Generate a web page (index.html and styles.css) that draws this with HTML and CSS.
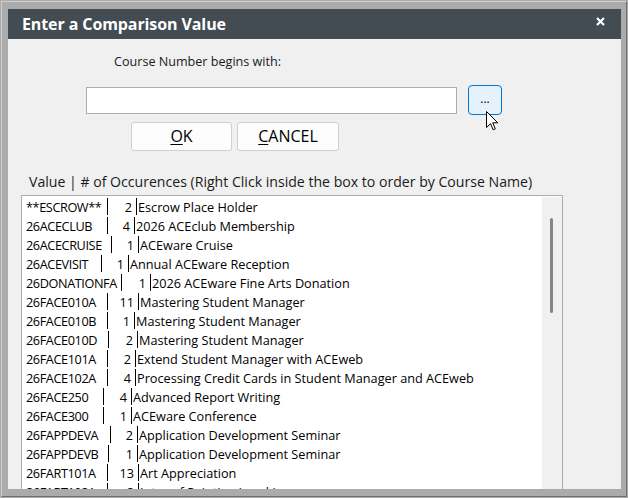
FILE: index.html
```html
<!DOCTYPE html>
<html>
<head>
<meta charset="utf-8">
<link rel="stylesheet" href="styles.css">
</head>
<body>
<div class="screen">
  <div class="bevel">
    <div class="dialog">
      <div class="titlebar">
        <span class="title">Enter a Comparison Value</span>
        <svg class="close" width="9" height="9" viewBox="0 0 9 9"><path d="M1 1 L8 8 M8 1 L1 8" stroke="#fff" stroke-width="2.2" fill="none"/></svg>
      </div>
      <div class="body">
        <div class="prompt">Course Number begins with:</div>
        <div class="inputrow">
          <div class="field"></div>
          <div class="dots">...</div>
        </div>
        <div class="btnrow">
          <div class="btn ok"><u>O</u>K</div>
          <div class="btn cancel"><u>C</u>ANCEL</div>
        </div>
        <div class="listlabel">Value | # of Occurences (Right Click inside the box to order by Course Name)</div>
        <div class="list">
          <div class="rows">
            <div class="row"><span class="v" style="width:81px">**ESCROW**</span><i class="sep"></i><span class="n" style="width:28px">2</span><i class="sep"></i><span class="t">Escrow Place Holder</span></div>
            <div class="row"><span class="v" style="width:81px">26ACECLUB</span><i class="sep"></i><span class="n" style="width:26px">4</span><i class="sep"></i><span class="t">2026 ACEclub Membership</span></div>
            <div class="row"><span class="v" style="width:85px">26ACECRUISE</span><i class="sep"></i><span class="n" style="width:26px">1</span><i class="sep"></i><span class="t">ACEware Cruise</span></div>
            <div class="row"><span class="v" style="width:75px">26ACEVISIT</span><i class="sep"></i><span class="n" style="width:26px">1</span><i class="sep"></i><span class="t">Annual ACEware Reception</span></div>
            <div class="row"><span class="v" style="width:95px">26DONATIONFA</span><i class="sep"></i><span class="n" style="width:28px">1</span><i class="sep"></i><span class="t">2026 ACEware Fine Arts Donation</span></div>
            <div class="row"><span class="v" style="width:81px">26FACE010A</span><i class="sep"></i><span class="n" style="width:30px">11</span><i class="sep"></i><span class="t">Mastering Student Manager</span></div>
            <div class="row"><span class="v" style="width:81px">26FACE010B</span><i class="sep"></i><span class="n" style="width:26px">1</span><i class="sep"></i><span class="t">Mastering Student Manager</span></div>
            <div class="row"><span class="v" style="width:82px">26FACE010D</span><i class="sep"></i><span class="n" style="width:28px">2</span><i class="sep"></i><span class="t">Mastering Student Manager</span></div>
            <div class="row"><span class="v" style="width:81px">26FACE101A</span><i class="sep"></i><span class="n" style="width:27px">2</span><i class="sep"></i><span class="t">Extend Student Manager with ACEweb</span></div>
            <div class="row"><span class="v" style="width:81px">26FACE102A</span><i class="sep"></i><span class="n" style="width:27px">4</span><i class="sep"></i><span class="t">Processing Credit Cards in Student Manager and ACEweb</span></div>
            <div class="row"><span class="v" style="width:77px">26FACE250</span><i class="sep"></i><span class="n" style="width:27px">4</span><i class="sep"></i><span class="t">Advanced Report Writing</span></div>
            <div class="row"><span class="v" style="width:77px">26FACE300</span><i class="sep"></i><span class="n" style="width:27px">1</span><i class="sep"></i><span class="t">ACEware Conference</span></div>
            <div class="row"><span class="v" style="width:84px">26FAPPDEVA</span><i class="sep"></i><span class="n" style="width:26px">2</span><i class="sep"></i><span class="t">Application Development Seminar</span></div>
            <div class="row"><span class="v" style="width:82px">26FAPPDEVB</span><i class="sep"></i><span class="n" style="width:28px">1</span><i class="sep"></i><span class="t">Application Development Seminar</span></div>
            <div class="row"><span class="v" style="width:81px">26FART101A</span><i class="sep"></i><span class="n" style="width:30px">13</span><i class="sep"></i><span class="t">Art Appreciation</span></div>
            <div class="row"><span class="v" style="width:81px">26FART102A</span><i class="sep"></i><span class="n" style="width:30px">2</span><i class="sep"></i><span class="t">Intro of Painting Level I</span></div>
          </div>
          <div class="scrollbar"><div class="thumb"></div></div>
        </div>
      </div>
    </div>
  </div>
  <svg class="cursor" width="13" height="20" viewBox="0 0 13 20"><path d="M0.5 0.5 V16.5 L4.5 12.7 L7.2 18.8 L9.3 17.9 L6.7 11.8 H11.8 Z" fill="#fff" stroke="#000" stroke-width="1" stroke-linejoin="miter"/></svg>
</div>
</body>
</html>
```
FILE: styles.css
```css
* { box-sizing: border-box; }
html, body { margin: 0; padding: 0; }
body {
  font-family: "Open Sans", "Noto Sans", sans-serif;
  color: #000;
  background: #ababab;
}
.screen {
  position: relative;
  width: 628px;
  height: 498px;
  padding: 1px;
  background: #ababab;
  overflow: hidden;
}
.bevel {
  height: 100%;
  border-style: solid;
  border-width: 1px;
  border-color: #cfcfcf #6e6e6e #6e6e6e #cfcfcf;
  padding: 7px 5px 7px 6px;
  display: flex;
}
.dialog {
  flex: 1;
  background: #f0f0f0;
  display: flex;
  flex-direction: column;
  overflow: hidden;
}
.titlebar {
  height: 30px;
  flex-shrink: 0;
  background: #434b53;
  display: flex;
  justify-content: space-between;
  padding: 0 16px 0 14px;
}
.title {
  color: #fff;
  font-weight: 700;
  font-size: 16px;
  line-height: 30px;
  letter-spacing: -0.1px;
}
.close { margin-top: 8px; }
.body {
  flex: 1;
  display: flex;
  flex-direction: column;
}
.prompt {
  margin-top: 15px;
  padding-left: 106px;
  font-size: 12.6px;
  line-height: 16px;
  color: #1a1a1a;
}
.inputrow {
  margin-top: 15px;
  padding-left: 78px;
  display: flex;
  align-items: center;
  gap: 11px;
  height: 30px;
}
.field {
  width: 371px;
  height: 27px;
  background: #fff;
  border: 1px solid #adadad;
}
.dots {
  width: 34px;
  height: 30px;
  border: 1px solid #0078d7;
  border-radius: 4px;
  background: #e5f1fb;
  font-size: 12px;
  line-height: 26px;
  text-align: center;
  color: #000;
}
.btnrow {
  margin-top: 7px;
  padding-left: 123px;
  display: flex;
  gap: 5px;
}
.btn {
  height: 29px;
  border: 1px solid #d0d0d0;
  border-radius: 3px;
  background: #fdfdfd;
  font-size: 16px;
  line-height: 27px;
  text-align: center;
  color: #000;
}
.btn u { text-underline-offset: 2px; text-decoration-thickness: 1px; }
.ok { width: 101px; }
.cancel { width: 102px; }
.listlabel {
  margin-top: 23px;
  padding-left: 21px;
  font-size: 14.1px;
  line-height: 16px;
  color: #1a1a1a;
}
.list {
  margin-top: 5px;
  margin-left: 13px;
  width: 542px;
  flex-shrink: 0;
  background: #fff;
  border: 1px solid #adadad;
  padding: 1px 0 1px 0;
  display: flex;
}
.rows {
  flex: 1;
}
.row {
  height: 19px;
  display: flex;
  align-items: center;
  padding-left: 4px;
  font-size: 12.7px;
  white-space: nowrap;
}
.v { flex-shrink: 0; letter-spacing: -0.4px; }
.n { flex-shrink: 0; text-align: right; padding-right: 4px; }
.t { padding-left: 1px; }
.sep {
  width: 1px;
  height: 17px;
  background: #000;
  flex-shrink: 0;
}
.scrollbar {
  width: 20px;
  background: #f0f0f0;
  flex-shrink: 0;
  padding: 21px 0 0 8px;
}
.thumb {
  width: 3px;
  height: 95px;
  border-radius: 2px;
  background: #858585;
}
.cursor {
  position: absolute;
  left: 486px;
  top: 111px;
}
```
